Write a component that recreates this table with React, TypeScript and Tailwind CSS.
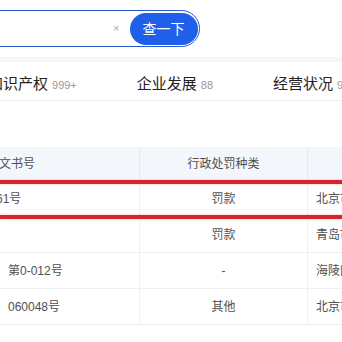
import React from "react";

const font = { fontFamily: '"Liberation Sans", "Noto Sans CJK SC", sans-serif' };

export default function App() {
  const rows = [
    { c1: "61号", c1Cls: "ml-[-4px]", c2: "罚款", c3: "北京市" },
    { c1: "", c1Cls: "", c2: "罚款", c3: "青岛市" },
    { c1: "第0-012号", c1Cls: "ml-[8px]", c2: "-", c3: "海陵区" },
    { c1: "060048号", c1Cls: "ml-[8px]", c2: "其他", c3: "北京市" },
  ];
  return (
    <div className="relative w-[342px] h-[342px] overflow-hidden bg-white" style={font}>
      {/* search */}
      <div className="h-[57px] pt-[10px] flex">
        <div className="ml-[-40px] w-[240px] h-[37px] rounded-full border-[1.5px] border-[#2a59cf] flex items-center justify-end pr-[1.5px]">
          <span className="text-[11px] leading-none text-[#aaa] mr-[10px]">×</span>
          <button className="w-[68px] h-[32px] rounded-full bg-[#1f5fea] text-white text-[14px] leading-none flex items-center justify-center">
            查一下
          </button>
        </div>
      </div>
      <div className="h-[5px] bg-[#f5f6f8]" />
      {/* tabs */}
      <div className="h-[39px] border-b border-[#eeeeee] flex items-center pt-[6px]">
        <div className="ml-[-12px] flex gap-[60px] items-baseline whitespace-nowrap">
          {[
            ["知识产权", "999+"],
            ["企业发展", "88"],
            ["经营状况", "99"],
          ].map(([t, n]) => (
            <div key={t} className="flex items-baseline">
              <span className="text-[15px] text-[#222]">{t}</span>
              <span className="ml-[4px] text-[11px] text-[#999]">{n}</span>
            </div>
          ))}
        </div>
      </div>
      <div className="h-[46px]" />
      {/* table */}
      <div className="text-[12px] text-[#505050] whitespace-nowrap">
        <div className="flex h-[34px] bg-[#f3f6fa] border-b border-[#edf0f4]">
          <div className="w-[140px] border-r border-[#e6eaf0] flex items-center">
            <span className="ml-[-1px]">文书号</span>
          </div>
          <div className="w-[168px] border-r border-[#e6eaf0] flex items-center justify-center">行政处罚种类</div>
          <div className="flex-1" />
        </div>
        {rows.map((r, i) => (
          <div key={i} className="flex h-[36px] border-b border-[#eef0f3]">
            <div className="w-[140px] shrink-0 border-r border-[#eef0f3] flex items-center">
              <span className={r.c1Cls}>{r.c1}</span>
            </div>
            <div className="w-[168px] shrink-0 border-r border-[#eef0f3] flex items-center justify-center">{r.c2}</div>
            <div className="flex-1 flex items-center pl-[8px] overflow-hidden">
              <span>{r.c3}</span>
            </div>
          </div>
        ))}
      </div>
      {/* red annotation */}
      <div className="absolute left-0 right-0 top-[180px] h-[4px] bg-[#d6262d] shadow-[0_0_2px_#f2a0a0]" />
      <div className="absolute left-0 right-0 top-[215px] h-[4px] bg-[#d6262d] shadow-[0_0_2px_#f2a0a0]" />
    </div>
  );
}
